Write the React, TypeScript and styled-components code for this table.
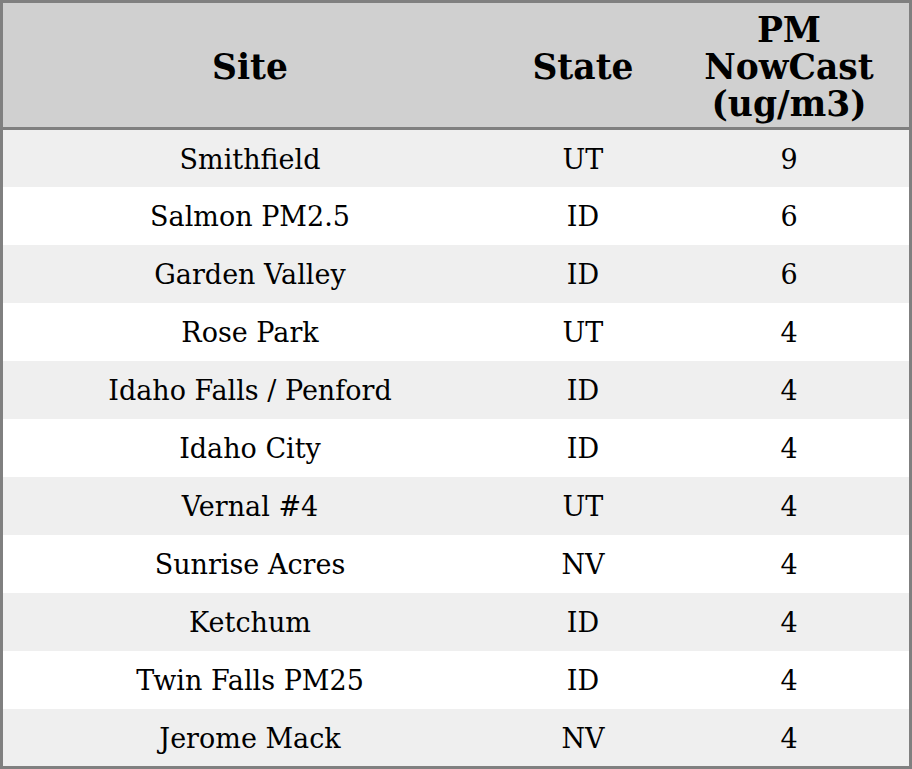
import React from "react";
import styled, { createGlobalStyle } from "styled-components";

const GlobalStyle = createGlobalStyle`
  html, body {
    margin: 0;
    padding: 0;
    background: #ffffff;
  }
  body {
    font-family: "DejaVu Serif", serif;
  }
`;

type Row = { site: string; state: string; pm: number };

const rows: Row[] = [
  { site: "Smithfield", state: "UT", pm: 9 },
  { site: "Salmon PM2.5", state: "ID", pm: 6 },
  { site: "Garden Valley", state: "ID", pm: 6 },
  { site: "Rose Park", state: "UT", pm: 4 },
  { site: "Idaho Falls / Penford", state: "ID", pm: 4 },
  { site: "Idaho City", state: "ID", pm: 4 },
  { site: "Vernal #4", state: "UT", pm: 4 },
  { site: "Sunrise Acres", state: "NV", pm: 4 },
  { site: "Ketchum", state: "ID", pm: 4 },
  { site: "Twin Falls PM25", state: "ID", pm: 4 },
  { site: "Jerome Mack", state: "NV", pm: 4 },
];

const App = () => {
  return (
    <>
      <GlobalStyle />
      <Table>
        <colgroup>
          <col style={{ width: 494 }} />
          <col style={{ width: 172 }} />
          <col style={{ width: 240 }} />
        </colgroup>
        <thead>
          <tr>
            <HeadCell>Site</HeadCell>
            <HeadCell>State</HeadCell>
            <HeadCell>
              PM
              <br />
              NowCast
              <br />
              (ug/m3)
            </HeadCell>
          </tr>
        </thead>
        <tbody>
          {rows.map((r, i) => (
            <BodyRow key={r.site} $striped={i % 2 === 0}>
              <Cell>{r.site}</Cell>
              <Cell>{r.state}</Cell>
              <Cell>{r.pm}</Cell>
            </BodyRow>
          ))}
        </tbody>
      </Table>
    </>
  );
};

export default App;

const Table = styled.table`
  width: 912px;
  border-collapse: separate;
  border-spacing: 0;
  border: 3px solid #808080;
  table-layout: fixed;
  box-sizing: border-box;
`;

const HeadCell = styled.th`
  background: #d0d0d0;
  color: #000;
  font-size: 34.5px;
  font-weight: bold;
  line-height: 37px;
  height: 127px;
  padding: 5px 4px 0;
  text-align: center;
  vertical-align: middle;
  border-bottom: 3px solid #808080;
  box-sizing: border-box;
`;

const BodyRow = styled.tr<{ $striped: boolean }>`
  background: ${(p) => (p.$striped ? "#efefef" : "#ffffff")};

  &:first-child > td,
  &:last-child > td {
    height: 57px;
  }
`;

const Cell = styled.td`
  font-size: 27px;
  line-height: 31px;
  height: 58px;
  padding: 1px 4px 0;
  text-align: center;
  vertical-align: middle;
  color: #000;
  box-sizing: border-box;
`;
